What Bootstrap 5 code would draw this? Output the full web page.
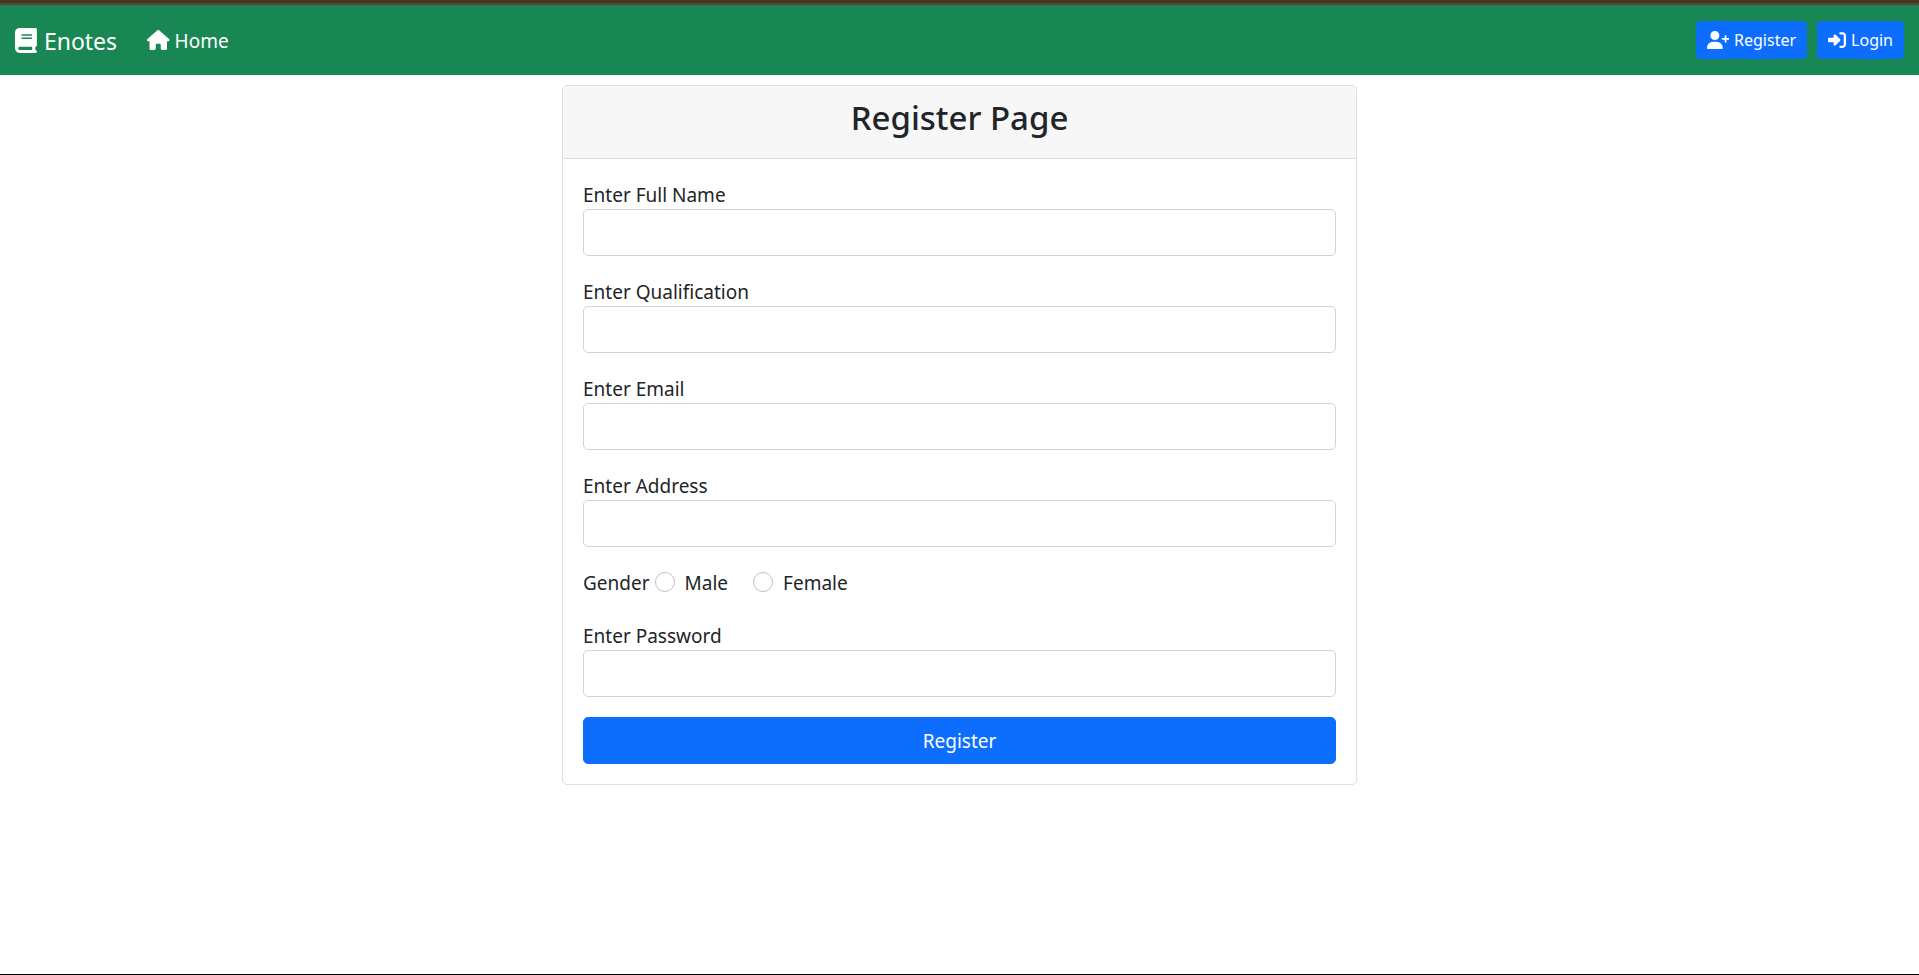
<!DOCTYPE html>
<html lang="en">
<head>
<meta charset="utf-8">
<meta name="viewport" content="width=device-width, initial-scale=1">
<title>Register Page</title>
<link href="https://cdn.jsdelivr.net/npm/bootstrap@5.3.0/dist/css/bootstrap.min.css" rel="stylesheet">
<style>
  html { font-size: 20px; }
  body {
    font-family: "Segoe UI", "Noto Sans", sans-serif;
    font-size: 19px;
    line-height: 30px;
    border-top: 3px solid #4a3721;
    border-bottom: 1px solid #000;
  }
  .top-edge { height: 2px; background: #56453a; }
  .fa-icon { height: 1em; fill: currentColor; flex: none; }
  .navbar-brand { font-size: 23px; line-height: 32px; gap: 7px; }
  .navbar-brand .fa-icon { height: 25px; }
  .nav-link .fa-icon { height: 20px; }
  .navbar-nav .nav-link { padding: 10px; font-size: 19px; line-height: 30px; }
  .navbar-brand span, .nav-link span { padding-top: 2px; line-height: 28px; }
  .nav-btn { --bs-btn-font-size: 16px; --bs-btn-border-radius: 4px; line-height: 26px; padding: 5px 10px; }
  .nav-btn .fa-icon { height: 18px; }
  .page-wrap { max-width: 1650px; --bs-gutter-x: 30px; }
  .page-wrap .row { --bs-gutter-x: 30px; }
  .card { --bs-card-border-radius: 5px; --bs-card-inner-border-radius: 4px; --bs-card-border-color: #dfdfdf; }
  .card-header { background: #f7f7f7; }
  .card-header h1 { font-size: 33px; line-height: 44px; font-weight: 500; margin-bottom: 8px; }
  .field-label, .gender-row { padding-top: 2px; line-height: 28px; }
  .field-label { display: block; }
  .form-control { height: 47px; border-radius: 5px; border-color: #ced4da; font-size: 19px; }
  .gender-row { min-height: 33px; }
  .form-check-inline { padding-left: 30px; margin-right: 25px; }
  .form-check-inline .form-check-input { width: 20px; height: 20px; margin: 3px 0 0 -30px; border-color: #bfbfbf; }
  .submit-btn { height: 47px; border-radius: 5px; font-size: 19px; line-height: 30px; }
</style>
</head>
<body class="min-vh-100">
<div class="top-edge"></div>
<nav class="navbar navbar-expand-lg navbar-dark bg-success py-2">
  <div class="container-fluid">
    <a class="navbar-brand d-flex align-items-center py-0" href="#">
      <svg class="fa-icon" viewBox="0 0 448 512" aria-hidden="true"><path d="M96 0C43 0 0 43 0 96L0 416c0 53 43 96 96 96l288 0 32 0c17.700 0 32-14.300 32-32s-14.300-32-32-32l0-64c17.700 0 32-14.300 32-32l0-320c0-17.700-14.300-32-32-32L384 0 96 0zm0 384l256 0 0 64L96 448c-17.700 0-32-14.300-32-32s14.300-32 32-32zm32-240c0-8.800 7.200-16 16-16l192 0c8.800 0 16 7.200 16 16s-7.200 16-16 16l-192 0c-8.800 0-16-7.200-16-16zm16 48l192 0c8.800 0 16 7.200 16 16s-7.200 16-16 16l-192 0c-8.800 0-16-7.200-16-16s7.200-16 16-16z"/></svg>
      <span>Enotes</span>
    </a>
    <ul class="navbar-nav me-auto">
      <li class="nav-item">
        <a class="nav-link active d-flex align-items-center gap-1" aria-current="page" href="#">
          <svg class="fa-icon" viewBox="0 0 576 512" aria-hidden="true"><path d="M575.8 255.500c0 18-15 32.100-32 32.100l-32 0 .7 160.200c0 2.700-.2 5.400-.5 8.100l0 16.200c0 22.100-17.900 40-40 40l-16 0c-1.100 0-2.200 0-3.300-.1c-1.400 .1-2.800 .1-4.200 .1L416 512l-24 0c-22.100 0-40-17.900-40-40l0-24 0-64c0-17.700-14.300-32-32-32l-64 0c-17.700 0-32 14.300-32 32l0 64 0 24c0 22.100-17.900 40-40 40l-24 0-31.900 0c-1.500 0-3-.1-4.500-.2c-1.200 .1-2.400 .2-3.600 .2l-16 0c-22.100 0-40-17.900-40-40l0-112c0-.9 0-1.900 .1-2.800l0-69.700-32 0c-18 0-32-14-32-32.100c0-9 3-17 10-24L266.400 8c7-7 15-8 22-8s15 2 21 7L564.800 231.500c8 7 12 15 11 24z"/></svg>
          <span>Home</span>
        </a>
      </li>
    </ul>
    <div class="d-flex gap-2">
      <a class="btn btn-primary btn-sm nav-btn d-flex align-items-center gap-1" href="#">
        <svg class="fa-icon" viewBox="0 0 640 512" aria-hidden="true"><path d="M96 128a128 128 0 1 1 256 0A128 128 0 1 1 96 128zM0 482.300C0 383.800 79.800 304 178.300 304l91.400 0C368.200 304 448 383.800 448 482.300c0 16.400-13.300 29.700-29.700 29.700L29.700 512C13.300 512 0 498.700 0 482.300zM504 312l0-64-64 0c-13.300 0-24-10.700-24-24s10.700-24 24-24l64 0 0-64c0-13.300 10.700-24 24-24s24 10.700 24 24l0 64 64 0c13.300 0 24 10.700 24 24s-10.700 24-24 24l-64 0 0 64c0 13.300-10.700 24-24 24s-24-10.700-24-24z"/></svg>
        <span>Register</span>
      </a>
      <a class="btn btn-primary btn-sm nav-btn d-flex align-items-center gap-1" href="#">
        <svg class="fa-icon" viewBox="0 0 512 512" aria-hidden="true"><path d="M217.900 105.900L340.700 228.700c7.200 7.200 11.300 17.100 11.300 27.300s-4.100 20.100-11.300 27.300L217.900 406.100c-6.400 6.400-15 9.900-24 9.900c-18.700 0-33.900-15.200-33.900-33.900l0-62.100L32 320c-17.700 0-32-14.300-32-32l0-64c0-17.700 14.300-32 32-32l128 0 0-62.100c0-18.700 15.200-33.900 33.900-33.900c9 0 17.600 3.600 24 9.900zM352 416l64 0c17.700 0 32-14.300 32-32l0-256c0-17.700-14.300-32-32-32l-64 0c-17.700 0-32-14.300-32-32s14.300-32 32-32l64 0c53 0 96 43 96 96l0 256c0 53-43 96-96 96l-64 0c-17.700 0-32-14.300-32-32s14.300-32 32-32z"/></svg>
        <span>Login</span>
      </a>
    </div>
  </div>
</nav>

<main class="container-fluid page-wrap py-2">
  <div class="row justify-content-center">
    <div class="col-md-6">
      <div class="card">
        <div class="card-header text-center">
          <h1>Register Page</h1>
        </div>
        <form class="card-body">
          <div class="mb-3">
            <label class="field-label" for="fullName">Enter Full Name</label>
            <input type="text" class="form-control" id="fullName" name="fullName">
          </div>
          <div class="mb-3">
            <label class="field-label" for="qualification">Enter Qualification</label>
            <input type="text" class="form-control" id="qualification" name="qualification">
          </div>
          <div class="mb-3">
            <label class="field-label" for="email">Enter Email</label>
            <input type="email" class="form-control" id="email" name="email">
          </div>
          <div class="mb-3">
            <label class="field-label" for="address">Enter Address</label>
            <input type="text" class="form-control" id="address" name="address">
          </div>
          <div class="gender-row d-flex mb-3" role="radiogroup" aria-labelledby="genderLabel">
            <span id="genderLabel" class="me-1">Gender</span>
            <div class="form-check form-check-inline mb-0">
              <input class="form-check-input" type="radio" name="gender" id="male" value="male">
              <label class="form-check-label" for="male">Male</label>
            </div>
            <div class="form-check form-check-inline mb-0">
              <input class="form-check-input" type="radio" name="gender" id="female" value="female">
              <label class="form-check-label" for="female">Female</label>
            </div>
          </div>
          <div class="mb-3">
            <label class="field-label" for="password">Enter Password</label>
            <input type="password" class="form-control" id="password" name="password">
          </div>
          <button type="submit" class="btn btn-primary submit-btn w-100">Register</button>
        </form>
      </div>
    </div>
  </div>
</main>
<script src="https://cdn.jsdelivr.net/npm/bootstrap@5.3.0/dist/js/bootstrap.bundle.min.js"></script>
</body>
</html>
